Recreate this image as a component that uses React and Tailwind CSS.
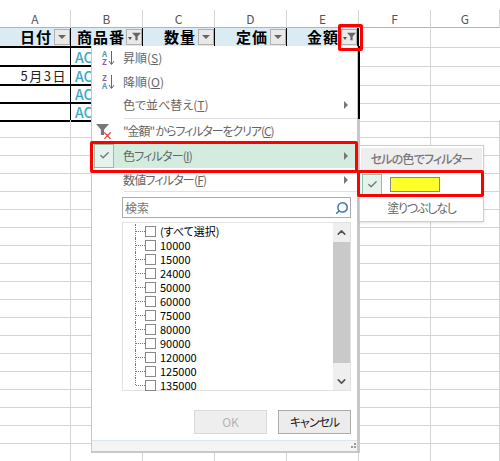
import { ChevronUp, ChevronDown, Check, Search } from "lucide-react";

const columns = ["A", "B", "C", "D", "E", "F", "G"];
const widths = "grid grid-cols-[71px_72px_72px_72px_72px_72px_69px]";
const amounts = ["10000", "15000", "24000", "50000", "60000", "75000", "80000", "90000", "120000", "125000", "135000"];

function Funnel({ className }) {
    return (
        <svg viewBox="0 0 12 12" className={className}>
            <path d="M0 1h12L7.5 6v5h-3V6z" fill="currentColor" />
        </svg>
    );
}

function HeaderCell({ label, active, last, clip }) {
    return (
        <div className={`flex items-center justify-end gap-[2px] bg-[#daebf3] border-b-2 border-b-black pb-px font-bold text-[15px] tracking-[1px] ${clip ? "pl-[6px]" : ""} ${last ? "border-r-2 border-r-black" : "border-r border-r-black"}`}>
            <span className={`whitespace-nowrap leading-[17px] ${clip ? "min-w-0 flex-1 overflow-x-clip" : ""}`}>{label}</span>
            <span className="flex h-[16px] w-[16px] shrink-0 items-center justify-center border border-[#b0b0b0] bg-[#e9e9e9] text-[#666]">
                {active ? (
                    <span className="flex items-end">
                        <span className="mb-px h-0 w-0 border-x-[2px] border-t-[3px] border-x-transparent border-t-[#555]" />
                        <Funnel className="h-[9px] w-[9px]" />
                    </span>
                ) : (
                    <span className="h-0 w-0 border-x-[4px] border-t-[4px] border-x-transparent border-t-[#666]" />
                )}
            </span>
        </div>
    );
}

function DataRow({ date, height }) {
    return (
        <div className={`${widths} ${height}`}>
            <div className="flex items-center justify-end border-b-2 border-r border-b-black border-r-black pr-[3px] pt-[2px] text-[13px] leading-[16px] tracking-[1.5px] text-[#222]">{date}</div>
            <div className="flex items-center border-b-2 border-b-black pl-[4px] pt-[2px] text-[14px] font-medium leading-[16px] text-[#3da8c2]">
                <span className="w-[16px] overflow-x-clip whitespace-nowrap">AC</span>
            </div>
            <div className="border-b-2 border-b-black" />
            <div className="border-b-2 border-b-black" />
            <div className="border-b-2 border-r-2 border-b-black border-r-black" />
            <div className="border-b border-r border-[#d4d4d4]" />
            <div className="border-b border-[#d4d4d4]" />
        </div>
    );
}

function BlankRow({ height }) {
    return (
        <div className={`${widths} ${height} border-b border-b-[#d4d4d4]`}>
            {columns.map((c) => (
                <div key={c} className="border-r border-r-[#d4d4d4]" />
            ))}
        </div>
    );
}

function Sheet() {
    return (
        <div className="w-[500px] pt-[10px]">
            {/* COLUMN LETTERS */}
            <div className={`${widths} h-[18px] border-b border-b-[#b4b4b4]`}>
                {columns.map((c) => (
                    <div key={c} className="flex items-center justify-center border-r border-r-[#d4d4d4] text-[12px] text-[#555]">{c}</div>
                ))}
            </div>

            {/* TABLE HEADER */}
            <div className={`${widths} h-[19px]`}>
                <HeaderCell label="日付" />
                <HeaderCell label="商品番号" active clip />
                <HeaderCell label="数量" />
                <HeaderCell label="定価" />
                <HeaderCell label="金額" active last />
                <div className="border-b border-r border-[#d4d4d4]" />
                <div className="border-b border-[#d4d4d4]" />
            </div>

            {/* DATA */}
            <DataRow date="" height="h-[19px]" />
            <DataRow date="5月3日" height="h-[18px]" />
            <DataRow date="" height="h-[18px]" />
            <DataRow date="" height="h-[18px]" />
            {Array.from({ length: 19 }).map((_, i) => (
                <BlankRow key={i} height="h-[18px]" />
            ))}
        </div>
    );
}

function SortIcon({ top, bottom }) {
    return (
        <span className="flex w-[30px] items-center justify-center gap-[1px] pl-[3px]">
            <span className="flex flex-col text-[8px] font-bold leading-[8px]">
                <span className={top === "A" ? "text-[#5f8fc4]" : "text-[#8a5fb0]"}>{top}</span>
                <span className={bottom === "A" ? "text-[#5f8fc4]" : "text-[#8a5fb0]"}>{bottom}</span>
            </span>
            <svg viewBox="0 0 7 16" className="h-[16px] w-[7px] text-[#666]">
                <path d="M3.5 1v13M1 11l2.5 3.5L6 11" fill="none" stroke="currentColor" />
            </svg>
        </span>
    );
}

function Arrow() {
    return <span className="h-0 w-0 border-y-[4px] border-l-[4px] border-y-transparent border-l-[#777]" />;
}

function MenuItem({ icon, label, hot, arrow, height, tight }) {
    return (
        <div className={`flex items-center pr-[9px] ${height}`}>
            <span className="w-[31px] shrink-0">{icon}</span>
            <span className={`flex-1 whitespace-nowrap ${tight || ""}`}>
                {label}(<span className="underline">{hot}</span>)
            </span>
            {arrow && <Arrow />}
        </div>
    );
}

function ListRow({ label, last }) {
    return (
        <div className="relative flex h-[14px] items-center pl-[13px] leading-[14px] whitespace-nowrap">
            <span className={`absolute left-[12px] top-0 w-0 border-l border-dotted border-l-[#777] ${last ? "h-[7px]" : "h-[14px]"}`} />
            <span className="h-0 w-[9px] border-t border-dotted border-t-[#777]" />
            <span className="h-[11px] w-[11px] shrink-0 border border-[#888] bg-white" />
            <span className="ml-[4px]">{label}</span>
        </div>
    );
}

function FilterMenu() {
    return (
        <div className="absolute left-[91px] top-[46px] flex h-[407px] w-[269px] flex-col border-b-2 border-l border-r-[3px] border-[#c8c8c8] bg-white text-[12px] text-[#666] [font-feature-settings:'palt']">
            <MenuItem height="h-[24px]" icon={<SortIcon top="A" bottom="Z" />} label="昇順" hot="S" />
            <MenuItem height="h-[23px]" icon={<SortIcon top="Z" bottom="A" />} label="降順" hot="O" />
            <MenuItem height="h-[24px]" label="色で並べ替え" hot="T" arrow />
            <div className="ml-[32px] mt-[1px] h-px bg-[#e0e0e0]" />
            <MenuItem
                height="h-[24px]"
                tight="tracking-[-1.1px]"
                icon={
                    <span className="relative ml-[4px] block h-[16px] w-[18px]">
                        <Funnel className="h-[13px] w-[13px] text-[#777]" />
                        <span className="absolute bottom-[-2px] right-[1px] text-[11px] font-bold leading-none text-[#d9442f]">×</span>
                    </span>
                }
                label={'"金額" からフィルターをクリア'}
                hot="C"
            />
            <div className="mx-[2px] flex h-[25px] items-center bg-[#d3ecdf] pr-[7px]">
                <span className="flex h-[24px] w-[20px] shrink-0 items-center justify-center border border-[#8cc3a4] bg-[#e6f3ec] text-[#777]">
                    <Check size={11} strokeWidth={3} />
                </span>
                <span className="ml-[9px] flex-1 tracking-[-0.8px]">色フィルター(<span className="underline">I</span>)</span>
                <Arrow />
            </div>
            <MenuItem height="h-[23px]" tight="tracking-[-0.8px]" label="数値フィルター" hot="F" arrow />
            <div className="ml-[32px] h-px bg-[#e0e0e0]" />

            {/* SEARCH */}
            <div className="ml-[30px] mr-[6px] mt-[5px] flex h-[21px] items-center justify-between border border-[#ababab] pl-[2px] pr-[1px] text-[#777]">
                <span>検索</span>
                <Search size={14} strokeWidth={2.6} className="-scale-x-100 text-[#3a78b5]" />
            </div>

            {/* VALUE LIST */}
            <div className="ml-[30px] mr-[6px] mt-[4px] flex h-[169px] border border-[#e2e2e2]">
                <div className="flex-1 pt-px text-[11px] text-black">
                    <ListRow label="(すべて選択)" />
                    {amounts.map((a, i) => (
                        <ListRow key={a} label={a} last={i === amounts.length - 1} />
                    ))}
                </div>
                <div className="flex w-[17px] flex-col items-center justify-between bg-[#efefef] text-[#555]">
                    <span className="flex h-[18px] items-center"><ChevronUp size={13} strokeWidth={3} /></span>
                    <span className="h-[121px] w-full bg-[#c9c9c9]" />
                    <span className="flex h-[27px] items-end pb-[2px]"><ChevronDown size={13} strokeWidth={3} /></span>
                </div>
            </div>

            {/* BUTTONS */}
            <div className="mr-[6px] mt-[19px] flex justify-end gap-[11px]">
                <button className="h-[24px] w-[73px] border border-[#d9d9d9] bg-[#eeeeee] text-[#b4b4b4]">OK</button>
                <button className="h-[24px] w-[73px] border border-[#acacac] bg-[#ececec] tracking-[-1px] text-[#222]">キャンセル</button>
            </div>

            {/* GRIP */}
            <div className="mt-auto flex h-[11px] justify-end border-t border-t-[#dce6ee] bg-[#f4f4f4] pr-px pt-[2px]">
                <span className="grid grid-cols-2 gap-[1px] self-start">
                    <span />
                    <span className="h-[2px] w-[2px] bg-[#999]" />
                    <span className="h-[2px] w-[2px] bg-[#999]" />
                    <span className="h-[2px] w-[2px] bg-[#999]" />
                </span>
            </div>
        </div>
    );
}

function ColorSubmenu() {
    return (
        <div className="absolute left-[359px] top-[145px] flex h-[77px] w-[125px] flex-col border border-[#cfcfcf] bg-white p-px text-[12px] text-[#666] shadow-sm [font-feature-settings:'palt']">
            <div className="mt-[1px] flex h-[22px] items-center justify-center bg-[#eeeeee] font-medium tracking-[-0.8px] text-[#777]">セルの色でフィルター</div>
            <div className="mt-[3px] flex h-[22px] items-center pl-[1px]">
                <span className="flex h-[21px] w-[20px] items-center justify-center border border-[#8cc3a4] bg-[#e6f3ec] text-[#777]">
                    <Check size={11} strokeWidth={3} />
                </span>
                <span className="ml-[8px] h-[15px] w-[50px] border border-[#888] bg-[#ffff2a]" />
            </div>
            <div className="flex flex-1 items-center justify-center tracking-[-1.2px]">塗りつぶしなし</div>
        </div>
    );
}

export default function App() {
    return (
        <div className="relative h-[461px] w-[500px] overflow-hidden bg-white font-['Noto_Sans_CJK_JP','Liberation_Sans',sans-serif] text-black">
            <Sheet />
            <FilterMenu />
            <ColorSubmenu />

            {/* TABLE EDGE OVER THE MENU */}
            <div className="absolute left-[358px] top-[46px] h-[73px] w-[2px] bg-black" />

            {/* RED CALLOUTS */}
            <div className="absolute left-[338px] top-[24px] h-[27px] w-[25px] rounded-[2px] border-[3px] border-[#ff0000]" />
            <div className="absolute left-[90px] top-[141px] h-[32px] w-[268px] rounded-[2px] border-[3px] border-[#ff0000]" />
            <div className="absolute left-[357px] top-[170px] h-[27px] w-[127px] rounded-[2px] border-[3px] border-[#ff0000]" />
        </div>
    );
}
